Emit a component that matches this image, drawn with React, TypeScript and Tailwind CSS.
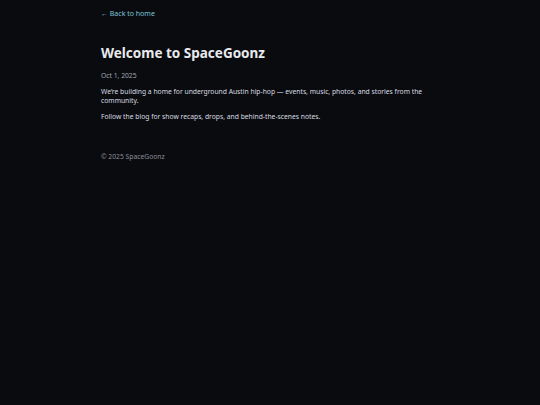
import React from 'react';

export default function App() {
  return (
    <div className="min-h-screen bg-[#0a0b0f] text-gray-200" style={{ fontFamily: '"Noto Sans", "Open Sans", sans-serif' }}>
      <main className="mx-auto max-w-[338px] pt-[9px] leading-none">
        <a href="#" className="block text-[7px] leading-[10px] text-[#7cc4d8]">← Back to home</a>
        <article className="mt-[24px]">
          <h1 className="text-[13.5px] font-bold leading-[20px] text-[#e8eaee]">Welcome to SpaceGoonz</h1>
          <p className="mt-[8px] text-[6.75px] leading-[10px] text-[#a3a7b0]">Oct 1, 2025</p>
          <div className="mt-[6px] space-y-[7px] text-[6.75px] leading-[9px] text-[#d8dbe0]">
            <p>We’re building a home for underground Austin hip-hop — events, music, photos, and stories from the community.</p>
            <p>Follow the blog for show recaps, drops, and behind-the-scenes notes.</p>
          </div>
        </article>
        <footer className="mt-[31px] text-[6.75px] leading-[10px] text-[#8a8e98]">© 2025 SpaceGoonz</footer>
      </main>
    </div>
  );
}
